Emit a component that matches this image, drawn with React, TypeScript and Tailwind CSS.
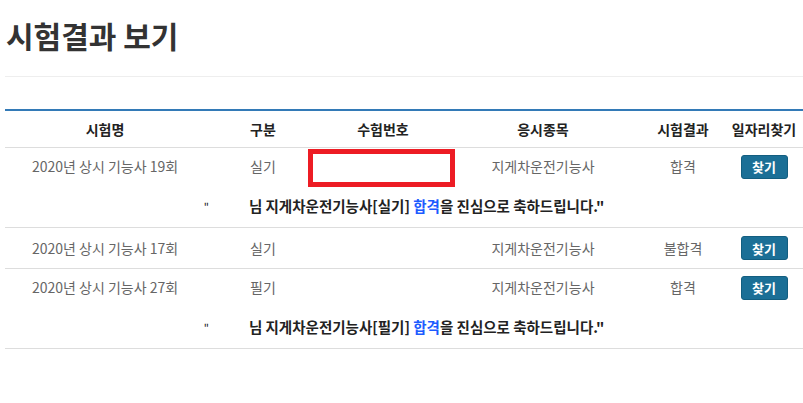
import React from "react";

type Row = {
  id: string;
  exam: string;
  kind: string;
  subject: string;
  result: string;
  congrats: boolean;
  masked: boolean;
};

const rows: Row[] = [
  { id: "r1", exam: "2020년 상시 기능사 19회", kind: "실기", subject: "지게차운전기능사", result: "합격", congrats: true, masked: true },
  { id: "r2", exam: "2020년 상시 기능사 17회", kind: "실기", subject: "지게차운전기능사", result: "불합격", congrats: false, masked: false },
  { id: "r3", exam: "2020년 상시 기능사 27회", kind: "필기", subject: "지게차운전기능사", result: "합격", congrats: true, masked: false },
];

const cols = "grid grid-cols-[200px_116px_124px_196px_84px_78px]";
const font = "font-['Noto_Sans_CJK_KR','Noto_Sans',sans-serif]";

export default function App() {
  return (
    <div className={`h-[403px] w-[803px] overflow-hidden bg-white pl-[5px] pt-[20px] ${font}`}>
      <h1 className="ml-[1px] text-[30px] font-bold leading-none text-[#333]">시험결과 보기</h1>
      <div className="mt-[26px] h-px bg-[#eee]" />

      <div className="mt-[32px] border-t-2 border-[#337ab7]">
        <div className={`${cols} h-[37px] items-center border-b border-[#ddd] text-center text-[14px] font-bold text-[#222]`}>
          <div>시험명</div>
          <div>구분</div>
          <div>수험번호</div>
          <div>응시종목</div>
          <div>시험결과</div>
          <div>일자리찾기</div>
        </div>

        {rows.map((r) => (
          <div key={r.id} className="border-b border-[#ddd]">
            <div
              className={`${cols} ${r.congrats ? "h-[37px]" : "h-[40px]"} items-center text-center text-[14px] text-[#666]`}
            >
              <div>{r.exam}</div>
              <div>{r.kind}</div>
              <div className="relative h-full">
                {r.masked ? (
                  <div className="absolute left-[-13px] top-[1px] h-[38px] w-[147px] border-[5px] border-[#ed1c24]" />
                ) : null}
              </div>
              <div>{r.subject}</div>
              <div>{r.result}</div>
              <div className="flex justify-center">
                <button
                  type="button"
                  className="h-[24px] w-[47px] rounded-[3px] border border-[#135e80] bg-[#1b6f96] text-[13px] font-bold leading-none text-white"
                >
                  찾기
                </button>
              </div>
            </div>
            {r.congrats ? (
              <div className="flex h-[42px] items-center justify-center text-[14.5px] font-bold text-[#222]">
                <span className="text-[11px] font-normal">"</span>
                <span className="inline-block w-[40px]" />
                <span>
                  님 {r.subject}[{r.kind}] <span className="text-[#1d5bff]">합격</span>을 진심으로 축하드립니다."
                </span>
              </div>
            ) : null}
          </div>
        ))}
      </div>
    </div>
  );
}
